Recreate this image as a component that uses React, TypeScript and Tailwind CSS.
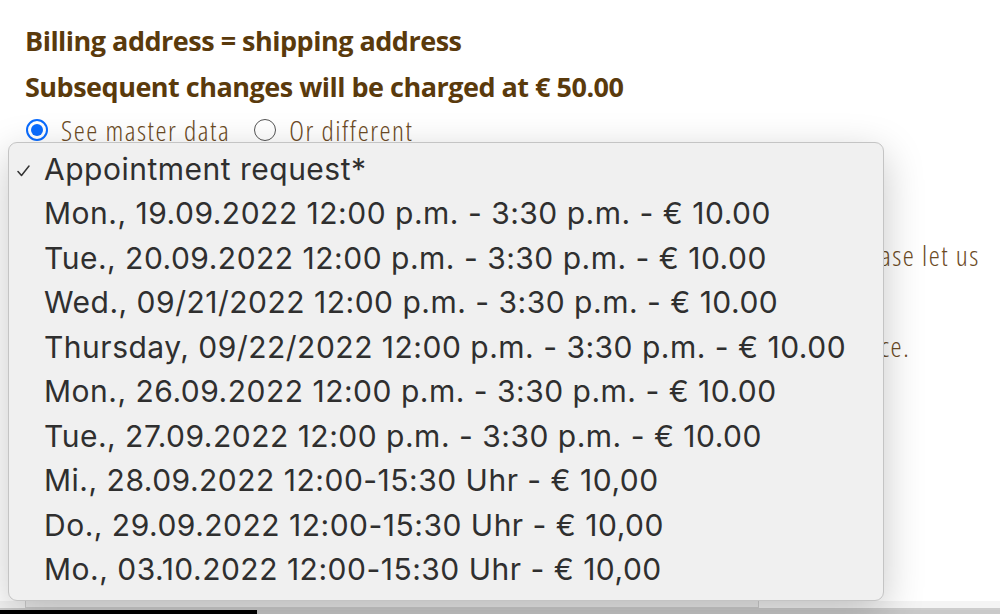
import React from "react";

const items = [
  "Mon., 19.09.2022 12:00 p.m. - 3:30 p.m. - € 10.00",
  "Tue., 20.09.2022 12:00 p.m. - 3:30 p.m. - € 10.00",
  "Wed., 09/21/2022 12:00 p.m. - 3:30 p.m. - € 10.00",
  "Thursday, 09/22/2022 12:00 p.m. - 3:30 p.m. - € 10.00",
  "Mon., 26.09.2022 12:00 p.m. - 3:30 p.m. - € 10.00",
  "Tue., 27.09.2022 12:00 p.m. - 3:30 p.m. - € 10.00",
  "Mi., 28.09.2022 12:00-15:30 Uhr - € 10,00",
  "Do., 29.09.2022 12:00-15:30 Uhr - € 10,00",
  "Mo., 03.10.2022 12:00-15:30 Uhr - € 10,00",
];

const bold = { fontFamily: '"Open Sans", "Liberation Sans Narrow", sans-serif', fontStretch: "90%" } as React.CSSProperties;
const light = { fontFamily: '"Open Sans", "Liberation Sans Narrow", sans-serif', fontStretch: "75%" } as React.CSSProperties;

export default function App() {
  return (
    <div className="relative w-[1000px] h-[614px] overflow-hidden bg-white">
      <div className="flex flex-col h-full">
        <div className="pl-[25px] pt-[18px] flex flex-col">
          <div style={bold} className="text-[27px] tracking-[-0.5px] font-bold leading-[46px] text-[#5a3a0c]">Billing address = shipping address</div>
          <div style={bold} className="text-[27px] tracking-[-0.5px] font-bold leading-[46px] text-[#5a3a0c]">Subsequent changes will be charged at € 50.00</div>
          <div style={light} className="flex items-center h-[40px] text-[28px] tracking-[1.5px] font-light text-[#6b4a24]">
            <span className="w-[22px] h-[22px] rounded-full border-[2px] border-[#0a6cff] flex items-center justify-center mr-[13px] ml-[1px]">
              <span className="w-[12px] h-[12px] rounded-full bg-[#0a6cff]" />
            </span>
            <span>See master data</span>
            <span className="w-[22px] h-[22px] rounded-full border-[1.5px] border-[#555] ml-[24px] mr-[13px]" />
            <span>Or different</span>
          </div>
          <div style={light} className="text-[28px] tracking-[1.5px] font-light text-[#6b4a24] mt-[85px] pl-[855px] leading-[40px] whitespace-nowrap">ase let us</div>
          <div style={light} className="text-[28px] tracking-[1.5px] font-light text-[#6b4a24] mt-[51px] pl-[855px] leading-[40px]">ce.</div>
        </div>
        <div className="flex-1" />
        <div className="relative h-[13px] bg-[#f4f4f4]">
          <div className="ml-[25px] w-[734px] h-[7px] border-x border-b border-[#cfcfcf] bg-[#ececec]" />
          <div className="h-[2px] bg-[#cdcdcd]" />
          <div className="h-[4px] bg-[#c9c9c9] flex">
            <div className="w-[257px] h-full bg-black" />
          </div>
        </div>
      </div>

      <div
        className="absolute left-[8px] top-[142px] w-[876px] h-[459px] rounded-[9px] border border-[#c4c4c4] bg-[#f0f0f0] shadow-[0_12px_40px_rgba(0,0,0,0.22)] pt-[4px]"
        style={{ fontFamily: 'Inter, "Noto Sans", sans-serif' }}
      >
        <div className="relative flex items-center h-[44.5px] pl-[35px] text-[30px] tracking-[0.5px] text-[#2f2f2f]">
          <span className="absolute left-[8px] top-[18px]">
            <svg width="13" height="12" viewBox="0 0 13 12" fill="none">
              <path d="M1 6.5 L4.5 10.5 L12 1" stroke="#333" strokeWidth="1.5" strokeLinecap="round" strokeLinejoin="round" />
            </svg>
          </span>
          <span>Appointment request*</span>
        </div>
        {items.map((t) => (
          <div key={t} className="flex items-center h-[44.5px] pl-[35px] text-[30px] tracking-[0.5px] text-[#2f2f2f]">
            {t}
          </div>
        ))}
      </div>
    </div>
  );
}
